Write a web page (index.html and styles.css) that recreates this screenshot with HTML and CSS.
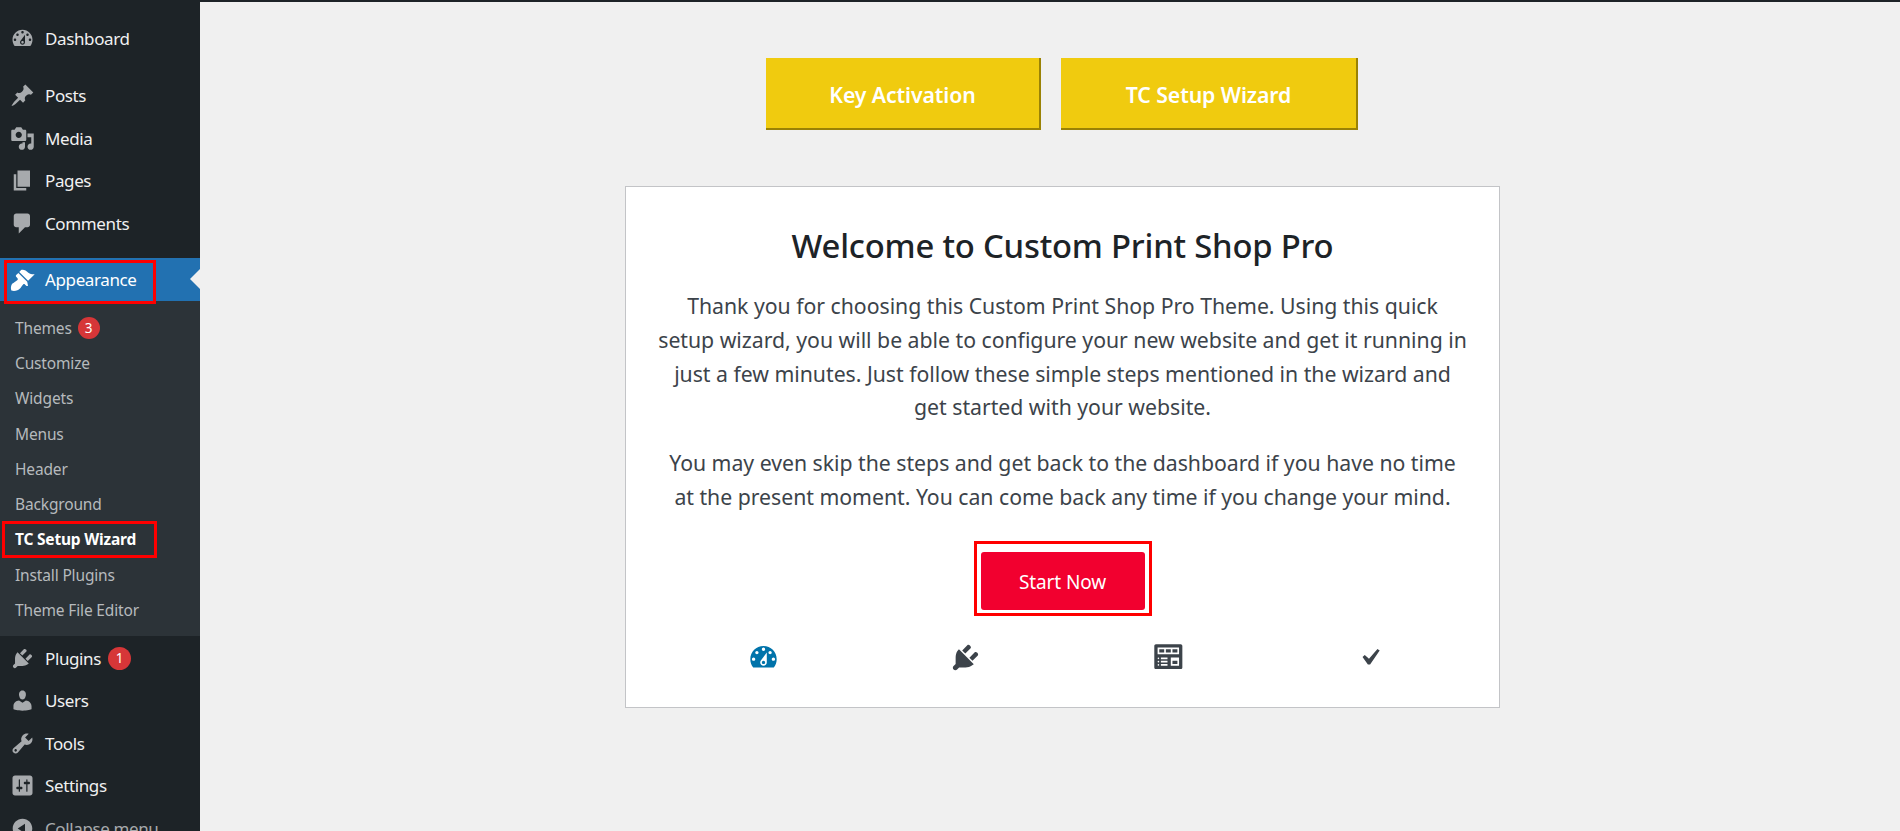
FILE: index.html
```html
<!DOCTYPE html>
<html lang="en">
<head>
<meta charset="utf-8">
<title>TC Setup Wizard</title>
<link rel="stylesheet" href="styles.css">
</head>
<body>
<div class="shell">
  <nav class="side">
    <ul class="menu">
      <li class="item gap-after"><svg class="ico" viewBox="0 0 20 20"><path fill-rule="evenodd" d="M3.76 16h12.48c1.1-1.37 1.76-3.11 1.76-5 0-4.42-3.58-8-8-8s-8 3.58-8 8c0 1.89.66 3.63 1.76 5zM10 4c.55 0 1 .45 1 1s-.45 1-1 1-1-.45-1-1 .45-1 1-1zM6 6c.55 0 1 .45 1 1s-.45 1-1 1-1-.45-1-1 .45-1 1-1zm8 0c.55 0 1 .45 1 1s-.45 1-1 1-1-.45-1-1 .45-1 1-1zm-5.37 5.55L12 7v6c0 1.1-.9 2-2 2s-2-.9-2-2c0-.57.24-1.08.63-1.45zM4 10c.55 0 1 .45 1 1s-.45 1-1 1-1-.45-1-1 .45-1 1-1zm12 0c.55 0 1 .45 1 1s-.45 1-1 1-1-.45-1-1 .45-1 1-1zm-5 3c0-.55-.45-1-1-1s-1 .45-1 1 .45 1 1 1 1-.45 1-1z"/></svg><span>Dashboard</span></li>
      <li class="item"><svg class="ico" viewBox="0 0 20 20"><path d="M10.44 3.02l1.82-1.82 6.36 6.35-1.83 1.82c-1.05-.68-2.48-.57-3.41.36l-.75.75c-.92.93-1.04 2.35-.35 3.41l-1.83 1.82-2.41-2.41-2.8 2.79c-.42.42-3.38 2.71-3.8 2.29s1.86-3.39 2.28-3.81l2.79-2.79L4.1 9.36l1.83-1.82c1.05.69 2.48.57 3.4-.36l.75-.75c.93-.92 1.05-2.35.36-3.41z"/></svg><span>Posts</span></li>
      <li class="item"><svg class="ico" viewBox="0 0 20 20"><path fill-rule="evenodd" d="M13 11V4c0-.55-.45-1-1-1h-1.67L9 1H5L3.67 3H2c-.55 0-1 .45-1 1v7c0 .55.45 1 1 1h10c.55 0 1-.45 1-1zM7 4.5c1.38 0 2.5 1.12 2.5 2.5S8.38 9.5 7 9.5 4.5 8.38 4.5 7 5.62 4.5 7 4.5zM14 6h5v10.5c0 1.38-1.12 2.5-2.5 2.5S14 17.88 14 16.5s1.12-2.5 2.5-2.5c.17 0 .34.02.5.05V9h-3V6zm-4 8.05V13h2v3.5c0 1.38-1.12 2.5-2.5 2.5S7 17.88 7 16.5 8.12 14 9.5 14c.17 0 .34.02.5.05z"/></svg><span>Media</span></li>
      <li class="item"><svg class="ico" viewBox="0 0 20 20"><path d="M6 15V2h10v13H6zm-1 1h8v2H3V5h2v11z"/></svg><span>Pages</span></li>
      <li class="item gap-after gap-short"><svg class="ico" viewBox="0 0 20 20"><path d="M5 2h9c1.1 0 2 .9 2 2v7c0 1.1-.9 2-2 2h-2l-5 5v-5H5c-1.1 0-2-.9-2-2V4c0-1.1.9-2 2-2z"/></svg><span>Comments</span></li>
      <li class="item current"><svg class="ico" viewBox="0 0 20 20"><path d="M14.48 11.06L7.41 3.99l1.5-1.5c.5-.56 2.3-.47 3.51.32 1.21.8 1.43 1.28 2.91 2.1 1.18.64 2.45 1.26 4.45.85zm-.71.71L6.7 4.7 4.93 6.47c-.39.39-.39 1.02 0 1.41l1.06 1.06c.39.39.39 1.03 0 1.42-.6.6-1.43 1.11-2.21 1.69-.35.26-.7.53-1.01.84C1.43 13.23.1 16.03 1.1 18.8c2.77 1 5.56-.33 6.88-1.67.31-.31.58-.66.84-1.01.58-.78 1.09-1.61 1.69-2.21.39-.39 1.03-.39 1.42 0l1.06 1.06c.39.39 1.02.39 1.41 0z"/></svg><span>Appearance</span><i class="mark mark-top"></i></li>
      <li>
        <ul class="sub">
          <li class="sub-item">Themes <b class="badge sub-badge">3</b></li>
          <li class="sub-item">Customize</li>
          <li class="sub-item">Widgets</li>
          <li class="sub-item">Menus</li>
          <li class="sub-item">Header</li>
          <li class="sub-item">Background</li>
          <li class="sub-item active">TC Setup Wizard<i class="mark mark-sub"></i></li>
          <li class="sub-item">Install Plugins</li>
          <li class="sub-item">Theme File Editor</li>
        </ul>
      </li>
      <li class="item"><svg class="ico" viewBox="0 0 20 20"><path d="M13.11 4.36L9.87 7.6 8 5.73l3.24-3.24c.35-.34 1.05-.2 1.56.32.52.51.66 1.21.31 1.55zm-8 1.77l.91-1.12 9.01 9.01-1.19.84c-.71.71-2.63 1.16-3.82 1.16H6.14L4.9 17.26c-.59.59-1.54.59-2.12 0-.59-.58-.59-1.53 0-2.12l1.24-1.24v-3.88c0-1.13.4-3.19 1.09-3.89zm7.26 3.97l3.24-3.24c.34-.35 1.04-.21 1.55.31.52.51.66 1.21.31 1.55l-3.24 3.25z"/></svg><span>Plugins</span><b class="badge">1</b></li>
      <li class="item"><svg class="ico" viewBox="0 0 20 20"><path d="M10 9.25c-2.27 0-2.73-3.44-2.73-3.44C7 4.02 7.82 2 9.97 2c2.16 0 2.98 2.02 2.71 3.81 0 0-.41 3.44-2.68 3.44zm0 2.57L12.72 10c2.39 0 4.52 2.33 4.52 4.53v2.49s-3.65 1.13-7.24 1.13c-3.65 0-7.24-1.13-7.24-1.13v-2.49c0-2.25 1.94-4.48 4.47-4.48z"/></svg><span>Users</span></li>
      <li class="item"><svg class="ico" viewBox="0 0 20 20"><path fill-rule="evenodd" d="M16.68 9.77c-1.34 1.34-3.3 1.67-4.95.99l-5.41 6.52c-.99.99-2.59.99-3.58 0s-.99-2.59 0-3.57l6.52-5.42c-.68-1.65-.35-3.61.99-4.95 1.28-1.28 3.12-1.62 4.72-1.06l-2.89 2.89 2.82 2.82 2.86-2.87c.53 1.58.18 3.39-1.08 4.65zM3.81 16.21c.4.39 1.04.39 1.43 0 .4-.4.4-1.04 0-1.43-.39-.4-1.03-.4-1.43 0-.39.39-.39 1.03 0 1.43z"/></svg><span>Tools</span></li>
      <li class="item"><svg class="ico" viewBox="0 0 20 20"><path fill-rule="evenodd" d="M18 16V4c0-1.1-.9-2-2-2H4c-1.1 0-2 .9-2 2v12c0 1.1.9 2 2 2h12c1.1 0 2-.9 2-2zM8 11h1c.55 0 1 .45 1 1s-.45 1-1 1H8v1.5c0 .28-.22.5-.5.5s-.5-.22-.5-.5V13H6c-.55 0-1-.45-1-1s.45-1 1-1h1V5.5c0-.28.22-.5.5-.5s.5.22.5.5V11zm5-2h-1c-.55 0-1-.45-1-1s.45-1 1-1h1V5.5c0-.28.22-.5.5-.5s.5.22.5.5V7h1c.55 0 1 .45 1 1s-.45 1-1 1h-1v5.5c0 .28-.22.5-.5.5s-.5-.22-.5-.5V9z"/></svg><span>Settings</span></li>
      <li class="item muted"><svg class="ico" viewBox="0 0 20 20"><path fill-rule="evenodd" d="M10 2.16c4.33 0 7.84 3.51 7.84 7.84s-3.51 7.84-7.84 7.84S2.16 14.33 2.16 10 5.71 2.16 10 2.16zm2 11.72V6.12L6.18 9.97z"/></svg><span>Collapse menu</span></li>
    </ul>
  </nav>
  <main class="main">
    <div class="tabs">
      <a class="tab tab-key">Key Activation</a>
      <a class="tab tab-wizard">TC Setup Wizard</a>
    </div>
    <section class="card">
      <h1 class="title">Welcome to Custom Print Shop Pro</h1>
      <p class="copy">Thank you for choosing this Custom Print Shop Pro Theme. Using this quick<br>setup wizard, you will be able to configure your new website and get it running in<br>just a few minutes. Just follow these simple steps mentioned in the wizard and<br>get started with your website.</p>
      <p class="copy">You may even skip the steps and get back to the dashboard if you have no time<br>at the present moment. You can come back any time if you change your mind.</p>
      <div class="cta"><a class="start">Start Now</a></div>
      <div class="steps">
        <svg class="step step-on" viewBox="0 0 20 20"><path fill-rule="evenodd" d="M3.76 16h12.48c1.1-1.37 1.76-3.11 1.76-5 0-4.42-3.58-8-8-8s-8 3.58-8 8c0 1.89.66 3.63 1.76 5zM10 4c.55 0 1 .45 1 1s-.45 1-1 1-1-.45-1-1 .45-1 1-1zM6 6c.55 0 1 .45 1 1s-.45 1-1 1-1-.45-1-1 .45-1 1-1zm8 0c.55 0 1 .45 1 1s-.45 1-1 1-1-.45-1-1 .45-1 1-1zm-5.37 5.55L12 7v6c0 1.1-.9 2-2 2s-2-.9-2-2c0-.57.24-1.08.63-1.45zM4 10c.55 0 1 .45 1 1s-.45 1-1 1-1-.45-1-1 .45-1 1-1zm12 0c.55 0 1 .45 1 1s-.45 1-1 1-1-.45-1-1 .45-1 1-1zm-5 3c0-.55-.45-1-1-1s-1 .45-1 1 .45 1 1 1 1-.45 1-1z"/></svg>
        <svg class="step" viewBox="0 0 20 20"><path d="M13.11 4.36L9.87 7.6 8 5.73l3.24-3.24c.35-.34 1.05-.2 1.56.32.52.51.66 1.21.31 1.55zm-8 1.77l.91-1.12 9.01 9.01-1.19.84c-.71.71-2.63 1.16-3.82 1.16H6.14L4.9 17.26c-.59.59-1.54.59-2.12 0-.59-.58-.59-1.53 0-2.12l1.24-1.24v-3.88c0-1.13.4-3.19 1.09-3.89zm7.26 3.97l3.24-3.24c.34-.35 1.04-.21 1.55.31.52.51.66 1.21.31 1.55l-3.24 3.25z"/></svg>
        <svg class="step" viewBox="0 0 20 20"><path fill-rule="evenodd" d="M19 16V3c0-.55-.45-1-1-1H3c-.55 0-1 .45-1 1v13c0 .55.45 1 1 1h15c.55 0 1-.45 1-1zM4 4h13v4H4V4zm1 1v2h3V5H5zm4 0v2h3V5H9zm4 0v2h3V5h-3zm-8.5 5c.28 0 .5.22.5.5s-.22.5-.5.5-.5-.22-.5-.5.22-.5.5-.5zM6 10h4v1H6v-1zm6 0h5v5h-5v-5zm-7.5 2c.28 0 .5.22.5.5s-.22.5-.5.5-.5-.22-.5-.5.22-.5.5-.5zM6 12h4v1H6v-1zm7 0v2h3v-2h-3zm-8.5 2c.28 0 .5.22.5.5s-.22.5-.5.5-.5-.22-.5-.5.22-.5.5-.5zM6 14h4v1H6v-1z"/></svg>
        <svg class="step" viewBox="0 0 20 20"><path d="M14.83 4.89l1.34.94-5.81 8.38H9.02L5.78 9.67l1.34-1.25 2.57 2.4z"/></svg>
      </div>
    </section>
  </main>
</div>
</body>
</html>
```

FILE: styles.css
```css
* { box-sizing: border-box; }
html, body { margin: 0; height: 100%; overflow: hidden; }
body { font-family: "Noto Sans", "Open Sans", sans-serif; background: #f0f0f0; color: #3c434a; }
ul { list-style: none; margin: 0; padding: 0; }

.shell { display: flex; height: 831px; overflow: hidden; }

.side { flex: 0 0 200px; background: #1d2327; padding-top: 16.5px; overflow: hidden; }
.item {
  position: relative; display: flex; align-items: center; height: 42.5px;
  padding: 1px 0 0 10px; color: #f0f0f1; font-size: 17px; letter-spacing: -0.38px;
}
.item.gap-after { margin-bottom: 15px; }
.item.gap-after.gap-short { margin-bottom: 14px; }
.ico { flex: 0 0 25px; width: 25px; height: 25px; margin-right: 10px; fill: #a7aaad; }
.current { background: #2271b1; color: #fff; }
.current .ico { fill: #fff; }
.current::after {
  content: ""; position: absolute; right: 0; top: 50%; margin-top: -10px;
  border: 10px solid transparent; border-right-color: #f0f0f0; border-left-width: 0;
}
.muted { color: #a7aaad; }

.sub { background: #2c3338; padding: 9.25px 0; }
.sub-item {
  position: relative; display: flex; align-items: center; height: 35.25px;
  padding: 1px 0 0 15px; color: #b6babd; font-size: 15.5px; letter-spacing: -0.15px;
}
.sub-item.active { color: #fff; font-weight: 700; letter-spacing: -0.2px; }

.badge {
  display: inline-flex; align-items: center; justify-content: center;
  width: 23px; height: 23px; margin-left: 7px; border-radius: 50%;
  background: #d63638; color: #fff; font-size: 13.5px; font-weight: 400; letter-spacing: 0;
}
.sub-badge { width: 22px; height: 22px; margin-left: 6px; }

.mark { position: absolute; border: 3px solid #f00; pointer-events: none; }
.mark-top { left: 4px; right: 44px; top: 2px; bottom: -3px; }
.mark-sub { left: 2px; right: 43px; top: 0; bottom: -1px; }

.main {
  flex: 1; min-width: 0; padding: 56px 0 0 25px; border-top: 2px solid #1d2327;
  display: flex; flex-direction: column; align-items: center;
}
.tabs { display: flex; gap: 20px; margin: 0 1px 56px 0; }
.tab {
  display: flex; align-items: center; justify-content: center; height: 72px; padding-top: 2px;
  background: #f0cb0f; color: #fff; font-size: 21.25px; font-weight: 600; letter-spacing: -0.1px;
  border-right: 2px solid #9a8205; border-bottom: 2px solid #9a8205;
}
.tab-key { width: 275px; }
.tab-wizard { width: 297px; }

.card {
  width: 875px; height: 522px; background: #fff; border: 1px solid #c3c4c7;
  padding: 37px 0 0; text-align: center;
  display: flex; flex-direction: column; align-items: center;
}
.title { margin: 0 0 21px; font-size: 32.8px; line-height: 44px; font-weight: 500; color: #1d2327; letter-spacing: -0.2px; }
.copy { margin: 0 0 22px; font-size: 21.25px; line-height: 33.75px; font-weight: 400; color: #3c434a; letter-spacing: -0.02px; }

.cta { border: 3px solid #f00; padding: 8px 4px 3px; margin-top: 5px; }
.start {
  display: flex; align-items: center; justify-content: center;
  width: 164px; height: 58px; padding-top: 3px; background: #f2002f; border-radius: 3px;
  color: #fff; font-size: 19px; letter-spacing: -0.1px;
}

.steps { display: grid; grid-template-columns: repeat(4, 202px); justify-items: center; margin: 25px 0 0 7px; }
.step { width: 33px; height: 33px; fill: #3c434a; }
.step-on { fill: #0073aa; }
```
